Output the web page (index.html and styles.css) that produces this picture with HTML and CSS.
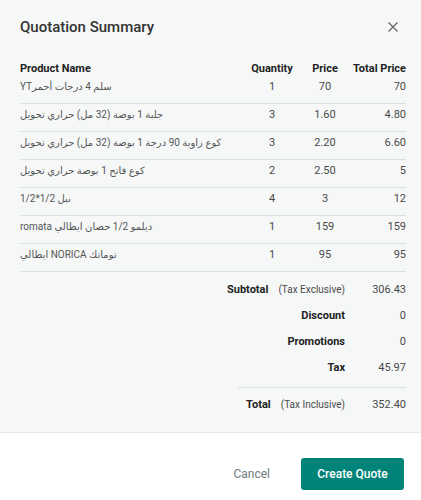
FILE: index.html
```html
<!DOCTYPE html>
<html lang="en">
<head>
<meta charset="utf-8">
<title>Quotation Summary</title>
<link rel="stylesheet" href="styles.css">
</head>
<body>
<div class="modal">
  <div class="content">
    <div class="head">
      <h1 class="title">Quotation Summary</h1>
      <button class="close" aria-label="Close">
        <svg width="10" height="10" viewBox="0 0 10 10"><path d="M0.5 0.5L9.5 9.5M9.5 0.5L0.5 9.5" stroke="#666" stroke-width="1.3" fill="none"/></svg>
      </button>
    </div>
    <div class="table">
      <div class="row thead">
        <div class="c-name">Product Name</div>
        <div class="c-qty">Quantity</div>
        <div class="c-price">Price</div>
        <div class="c-total">Total Price</div>
      </div>
      <div class="row">
        <div class="c-name"><span class="ar">سلم 4 درجات أحمرYT</span></div>
        <div class="c-qty">1</div>
        <div class="c-price">70</div>
        <div class="c-total">70</div>
      </div>
      <div class="row">
        <div class="c-name"><span class="ar">جلبة 1 بوصة (32 مل) حراري تحويل</span></div>
        <div class="c-qty">3</div>
        <div class="c-price">1.60</div>
        <div class="c-total">4.80</div>
      </div>
      <div class="row">
        <div class="c-name"><span class="ar">كوع زاوية 90 درجة 1 بوصة (32 مل) حراري تحويل</span></div>
        <div class="c-qty">3</div>
        <div class="c-price">2.20</div>
        <div class="c-total">6.60</div>
      </div>
      <div class="row">
        <div class="c-name"><span class="ar">كوع فاتح 1 بوصة حراري تحويل</span></div>
        <div class="c-qty">2</div>
        <div class="c-price">2.50</div>
        <div class="c-total">5</div>
      </div>
      <div class="row">
        <div class="c-name"><span class="ar">نبل 1/2*1/2</span></div>
        <div class="c-qty">4</div>
        <div class="c-price">3</div>
        <div class="c-total">12</div>
      </div>
      <div class="row">
        <div class="c-name"><span class="ar">ديلمو 1/2 حصان ايطالي romata</span></div>
        <div class="c-qty">1</div>
        <div class="c-price">159</div>
        <div class="c-total">159</div>
      </div>
      <div class="row">
        <div class="c-name"><span class="ar">توماتك NORICA ايطالي</span></div>
        <div class="c-qty">1</div>
        <div class="c-price">95</div>
        <div class="c-total">95</div>
      </div>
    </div>
    <div class="summary">
      <div class="srow">
        <div class="slabel"><b>Subtotal</b><span class="note">(Tax Exclusive)</span></div>
        <div class="sval">306.43</div>
      </div>
      <div class="srow">
        <div class="slabel"><b>Discount</b></div>
        <div class="sval">0</div>
      </div>
      <div class="srow">
        <div class="slabel"><b>Promotions</b></div>
        <div class="sval">0</div>
      </div>
      <div class="srow">
        <div class="slabel"><b>Tax</b></div>
        <div class="sval">45.97</div>
      </div>
      <div class="sdivider"></div>
      <div class="srow">
        <div class="slabel"><b>Total</b><span class="note">(Tax Inclusive)</span></div>
        <div class="sval">352.40</div>
      </div>
    </div>
  </div>
  <div class="footer">
    <button class="btn-cancel">Cancel</button>
    <button class="btn-primary">Create Quote</button>
  </div>
</div>
</body>
</html>
```

FILE: styles.css
```css
* { box-sizing: border-box; }
html, body { margin: 0; padding: 0; }
body {
  font-family: Roboto, "DejaVu Sans", sans-serif;
  background: #f6f8f8;
  color: #4a4a4a;
}
.modal {
  width: 421px;
  height: 500px;
  display: flex;
  flex-direction: column;
  overflow: hidden;
}
.content {
  background: #f6f8f8;
  padding: 17px 15px 14px 20px;
}
.head {
  display: flex;
  align-items: center;
  justify-content: space-between;
  height: 20px;
}
.title {
  margin: 0;
  font-size: 15px;
  line-height: 20px;
  font-weight: 500;
  color: #333;
}
.close {
  border: 0;
  background: none;
  padding: 0;
  width: 10px;
  height: 10px;
  margin-right: 8px;
  display: flex;
  cursor: pointer;
}
.table {
  margin-top: 25px;
  width: 386px;
}
.row {
  display: grid;
  grid-template-columns: 222px 60px 46px 58px;
  font-size: 11px;
  line-height: 14px;
  padding: 4px 0 9px;
  border-bottom: 1px solid #dde1e1;
}
.row.thead {
  padding: 0;
  border-bottom: 0;
  font-weight: 700;
  color: #222;
}
.c-name { text-align: left; overflow: hidden; white-space: nowrap; }
.c-qty, .c-price { text-align: center; }
.c-total { text-align: right; }
.ar {
  display: block;
  unicode-bidi: plaintext;
  text-align: left;
  font-size: 10px;
  color: #555;
}
.summary {
  width: 386px;
  margin-top: 5px;
}
.srow {
  display: grid;
  grid-template-columns: 1fr 61px;
  font-size: 11px;
  line-height: 26px;
}
.slabel {
  display: flex;
  justify-content: flex-end;
  align-items: baseline;
  gap: 10px;
  color: #222;
}
.slabel b { font-weight: 700; }
.note {
  font-size: 10px;
  color: #4a4a4a;
}
.sval { text-align: right; }
.sdivider {
  width: 168px;
  margin: 6px 0 4px auto;
  border-top: 1px solid #dde1e1;
}
.footer {
  flex: 1;
  background: #fff;
  border-top: 1px solid #e8eaea;
  display: flex;
  justify-content: flex-end;
  align-items: flex-start;
  gap: 15px;
  padding: 25px 17px 0 0;
}
.btn-cancel {
  border: 0;
  background: none;
  font-family: inherit;
  font-size: 12px;
  color: #6e7c7c;
  height: 32px;
  padding: 0 16px;
  cursor: pointer;
}
.btn-primary {
  border: 0;
  background: #00847a;
  color: #fff;
  font-family: inherit;
  font-size: 12px;
  font-weight: 500;
  height: 32px;
  width: 103px;
  border-radius: 3px;
  cursor: pointer;
}
```
